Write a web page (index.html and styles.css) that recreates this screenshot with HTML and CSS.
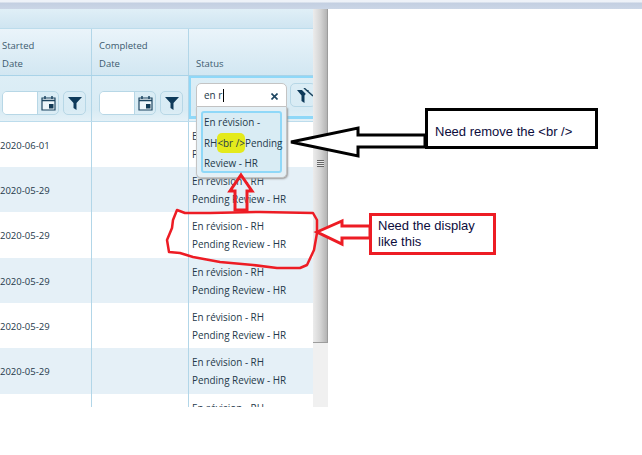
FILE: index.html
```html
<!DOCTYPE html>
<html>

<head>
  <meta charset="UTF-8">
  <title>Status filter</title>
  <link rel="stylesheet" href="styles.css">
</head>

<body>
  <div class="strip"></div>
  <div class="main">
    <div class="grid">
      <div class="group-band"></div>
      <div class="row head">
        <div class="cell c1">Started<br>Date</div>
        <div class="cell c2">Completed<br>Date</div>
        <div class="cell c3">Status</div>
      </div>
      <div class="row filters">
        <div class="cell c1">
          <div class="date"><span class="date_input"></span><span class="date_btn"><svg width="15" height="16" viewBox="0 0 15 16"><path d="M1 3h13v12H1z" fill="#eef6fa" stroke="#1d4560" stroke-width="1.200"/><path d="M1 5.500h13" stroke="#1d4560" stroke-width="1.500"/><path d="M4 1v3M11 1v3" stroke="#1d4560" stroke-width="1.500"/><rect x="8" y="9" width="4.500" height="4.500" fill="#123a55"/></svg></span></div>
          <div class="fbtn"><svg width="14" height="13" viewBox="0 0 14 13"><path d="M0 0H14L8.500 6V13L5.500 11V6z" fill="#0e3a5a"/></svg></div>
        </div>
        <div class="cell c2">
          <div class="date"><span class="date_input"></span><span class="date_btn"><svg width="15" height="16" viewBox="0 0 15 16"><path d="M1 3h13v12H1z" fill="#eef6fa" stroke="#1d4560" stroke-width="1.200"/><path d="M1 5.500h13" stroke="#1d4560" stroke-width="1.500"/><path d="M4 1v3M11 1v3" stroke="#1d4560" stroke-width="1.500"/><rect x="8" y="9" width="4.500" height="4.500" fill="#123a55"/></svg></span></div>
          <div class="fbtn"><svg width="14" height="13" viewBox="0 0 14 13"><path d="M0 0H14L8.500 6V13L5.500 11V6z" fill="#0e3a5a"/></svg></div>
        </div>
        <div class="cell c3 focus">
          <div class="search"><span>en r</span><i class="caret"></i><svg class="clear" width="7" height="7" viewBox="0 0 7 7"><path d="M0.500 0.500l6 6M6.500 0.500l-6 6" stroke="#1d4560" stroke-width="1.600"/></svg></div>
          <div class="fbtn clipped"><svg width="17" height="15" viewBox="0 0 17 15"><path d="M0 2H12L7.500 7.500V15L4.500 13V7.500z" fill="#0e3a5a"/><path d="M6 1l9 9" stroke="#d8ebf4" stroke-width="3"/><path d="M7 0l9 8" stroke="#1d4560" stroke-width="1.500"/></svg></div>
        </div>
      </div>
      <div class="row data">
        <div class="cell c1 date_val">2020-06-01</div><div class="cell c2"></div>
        <div class="cell c3">En révision - RH<br>Pending Review - HR</div>
      </div>
      <div class="row data alt">
        <div class="cell c1 date_val">2020-05-29</div><div class="cell c2"></div>
        <div class="cell c3">En révision - RH<br>Pending Review - HR</div>
      </div>
      <div class="row data tall">
        <div class="cell c1 date_val">2020-05-29</div><div class="cell c2"></div>
        <div class="cell c3">En révision - RH<br>Pending Review - HR</div>
      </div>
      <div class="row data alt">
        <div class="cell c1 date_val">2020-05-29</div><div class="cell c2"></div>
        <div class="cell c3">En révision - RH<br>Pending Review - HR</div>
      </div>
      <div class="row data">
        <div class="cell c1 date_val">2020-05-29</div><div class="cell c2"></div>
        <div class="cell c3">En révision - RH<br>Pending Review - HR</div>
      </div>
      <div class="row data alt tall">
        <div class="cell c1 date_val">2020-05-29</div><div class="cell c2"></div>
        <div class="cell c3">En révision - RH<br>Pending Review - HR</div>
      </div>
      <div class="row data">
        <div class="cell c1"></div><div class="cell c2"></div>
        <div class="cell c3">En révision - RH</div>
      </div>
    </div>
    <div class="scrollbar">
      <div class="thumb"><span class="grip"></span></div>
    </div>
  </div>

  <div class="dropdown">
    <div class="option">
      <div class="option_text">En révision -<br>RH<mark>&lt;br /&gt;</mark>Pending<br>Review - HR</div>
    </div>
  </div>

  <svg class="marks" width="642" height="455" viewBox="0 0 642 455">
    <path d="M241 175L252 191H247V210H235V191H230z" fill="none" stroke="#ed1c24" stroke-width="3"/>
    <path d="M177 210L185 213L210 213L260 212L313 213L317 220L317 233L314 250L307 265L300 268L277 268L253 265L220 262L193 257L180 253L169 252L167 240L172 228L173 220z" fill="none" stroke="#ed1c24" stroke-width="2.500" stroke-linejoin="round"/>
    <path d="M291 142L358 128V135H425V147H358V156z" fill="#fff" stroke="#000" stroke-width="3"/>
    <path d="M317 232L342 221V226H370V238H342V244z" fill="#fff" stroke="#ed1c24" stroke-width="3"/>
  </svg>
  <div class="note note_black">Need remove the &lt;br /&gt;</div>
  <div class="note note_red">Need the display<br>like this</div>
</body>

</html>
```
FILE: styles.css
```css
* {
  padding: 0;
  margin: 0;
  box-sizing: border-box;
}

body {
  width: 642px;
  height: 455px;
  overflow: hidden;
  background: #fff;
  font-family: "Open Sans", "Noto Sans", sans-serif;
  font-size: 9.900px;
  color: #24394a;
}

.strip {
  height: 9px;
  background: linear-gradient(#eef2f8 0, #eef2f8 2px, #c3cfe1 3px, #cbd6e6 100%);
}

.main {
  display: flex;
  height: 398px;
  width: 328px;
}

.grid {
  width: 313px;
  overflow: hidden;
}

.group-band {
  height: 20px;
  background: linear-gradient(#e0eff7, #cfe5f1);
  border-bottom: 1px solid #bcdcec;
}

.row {
  display: flex;
}

.cell {
  flex: none;
  border-right: 1px solid #b2d6e8;
}

.c1 {
  width: 92px;
}

.c2 {
  width: 97px;
}

.c3 {
  width: 124px;
  border-right: none;
}

.head {
  height: 47px;
  background: linear-gradient(#eaf4fa, #d2e7f2);
  border-bottom: 1px solid #a9d3e8;
  color: #3c5a6e;
  font-size: 9.500px;
  line-height: 18px;
}

.head .cell {
  padding: 8px 0 0 2px;
}

.head .c2 {
  padding-left: 7px;
}

.head .c3 {
  padding: 26px 0 0 7px;
}

.filters {
  height: 46px;
  background: linear-gradient(#ddeef6 0, #d8ebf4 75%, #e4f1f7 100%);
  border-bottom: 1px solid #bcdcec;
}

.filters .cell {
  display: flex;
  gap: 4px;
  padding: 15px 0 0 2px;
}

.filters .c2 {
  padding-left: 7px;
}

.filters .focus {
  padding: 5px 0 0 5px;
  gap: 3px;
  border: 2px solid #8fd8f8;
  border-right: none;
  border-bottom-width: 3px;
  margin-bottom: 2px;
  overflow: hidden;
}

.date {
  display: flex;
  width: 57px;
  height: 24px;
  border: 1px solid #b7d7e6;
  border-radius: 5px;
  overflow: hidden;
}

.date_input {
  width: 35px;
  background: #fff;
  border-right: 1px solid #b7d7e6;
}

.date_btn {
  flex: 1;
  display: flex;
  align-items: center;
  justify-content: center;
}

.fbtn {
  flex: none;
  width: 23px;
  height: 24px;
  border: 1px solid #b7d7e6;
  border-radius: 5px;
  display: flex;
  align-items: center;
  justify-content: center;
}

.clipped {
  width: 26px;
  justify-content: flex-start;
  padding-left: 6px;
}

.search {
  flex: none;
  position: relative;
  display: flex;
  align-items: center;
  width: 91px;
  height: 24px;
  padding-left: 7px;
  background: #fff;
  border: 1px solid #c4c4c4;
  border-radius: 5px 5px 0 0;
}

.caret {
  width: 1px;
  height: 13px;
  margin-left: 1px;
  background: #000;
}

.clear {
  position: absolute;
  right: 8px;
  top: 9px;
}

.data {
  height: 45px;
  background: #fff;
  line-height: 18px;
}

.tall {
  height: 46px;
}

.alt {
  background: #e5f0f7;
}

.data .cell {
  padding-top: 5px;
}

.data .c3 {
  padding-left: 3px;
}

.data .date_val {
  padding-top: 15px;
  font-size: 9.500px;
}

.scrollbar {
  width: 15px;
  background: #f0f0f0;
}

.thumb {
  height: 334px;
  display: flex;
  align-items: flex-end;
  justify-content: center;
  background: linear-gradient(90deg, #ececec, #d6d6d6 50%, #b4b4b4);
  border-right: 1px solid #9c9c9c;
  border-bottom: 1px solid #9c9c9c;
}

.grip {
  width: 7px;
  height: 7px;
  margin-bottom: 175px;
  background: repeating-linear-gradient(#666 0, #666 1px, #e8e8e8 1px, #e8e8e8 2px);
}

.dropdown {
  position: absolute;
  left: 196px;
  top: 107px;
  width: 91px;
  height: 71px;
  padding: 4px;
  background: #e4f0f6;
  border: 1px solid #c4c4c4;
  border-top: none;
  border-radius: 0 0 5px 5px;
  box-shadow: 1px 1px 2px #999;
}

.option {
  height: 62px;
  padding: 0 0 0 1px;
  background: #d9ecf4;
  border: 2px solid #8fd8f8;
  border-radius: 3px;
  white-space: nowrap;
}

.option_text {
  margin-top: -1px;
  line-height: 20.500px;
}

mark {
  padding: 3px 0;
  background: #e4ea1c;
  border-radius: 5px;
  color: inherit;
}

.marks {
  position: absolute;
  left: 0;
  top: 0;
}

.note {
  position: absolute;
  font-family: "Liberation Sans", Arial, sans-serif;
  font-size: 13px;
  line-height: 16px;
  color: #0c0c3c;
  background: #fff;
  border: 3px solid #000;
}

.note_black {
  left: 425px;
  top: 108px;
  width: 173px;
  height: 41px;
  padding: 13px 0 0 7px;
}

.note_red {
  left: 369px;
  top: 213px;
  width: 127px;
  height: 42px;
  padding: 2px 0 0 6px;
  border-color: #ed1c24;
}
```
